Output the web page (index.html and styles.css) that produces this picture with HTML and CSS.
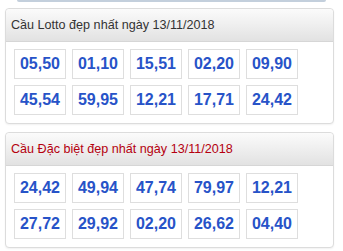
FILE: index.html
```html
<!DOCTYPE html>
<html>
<head>
<meta charset="utf-8">
<link rel="stylesheet" href="styles.css">
</head>
<body>
<div class="topbar"></div>
<div class="panel">
  <div class="head">Cầu Lotto đẹp nhất ngày 13/11/2018</div>
  <div class="grid">
    <div class="cell">05,50</div><div class="cell">01,10</div><div class="cell">15,51</div><div class="cell">02,20</div><div class="cell">09,90</div>
    <div class="cell">45,54</div><div class="cell">59,95</div><div class="cell">12,21</div><div class="cell">17,71</div><div class="cell">24,42</div>
  </div>
</div>
<div class="panel">
  <div class="head red">Cầu Đặc biệt đẹp nhất ngày 13/11/2018</div>
  <div class="grid">
    <div class="cell">24,42</div><div class="cell">49,94</div><div class="cell">47,74</div><div class="cell">79,97</div><div class="cell">12,21</div>
    <div class="cell">27,72</div><div class="cell">29,92</div><div class="cell">02,20</div><div class="cell">26,62</div><div class="cell">04,40</div>
  </div>
</div>
</body>
</html>
```
FILE: styles.css
```css
html, body { margin: 0; padding: 0; background: #fff; }
body { font-family: "Liberation Sans", Arial, sans-serif; width: 343px; overflow: hidden; }
.topbar {
  height: 2px;
  margin: 0 17px;
  background: #c3cfdc;
  border-radius: 0 0 4px 4px;
}
.panel {
  margin: 6px 9px 8px 5px;
  border: 1px solid #dcdcdc;
  border-radius: 4px;
  box-shadow: 0 1px 2px rgba(0,0,0,0.06);
  background: #fff;
}
.head {
  height: 32px;
  line-height: 32px;
  padding-left: 5px;
  font-size: 12.6px;
  color: #333;
  background: linear-gradient(#fbfbfb, #e2e2e2);
  border-bottom: 1px solid #d6d6d6;
  border-radius: 4px 4px 0 0;
}
.head.red { color: #b5000f; }
.grid {
  display: grid;
  grid-template-columns: repeat(5, 52px);
  gap: 6px;
  padding: 7px 8px 8px 8px;
}
.cell {
  height: 28px;
  line-height: 28px;
  border: 1px solid #dedede;
  text-align: center;
  font-size: 16px;
  font-weight: bold;
  color: #2753c8;
}
```
